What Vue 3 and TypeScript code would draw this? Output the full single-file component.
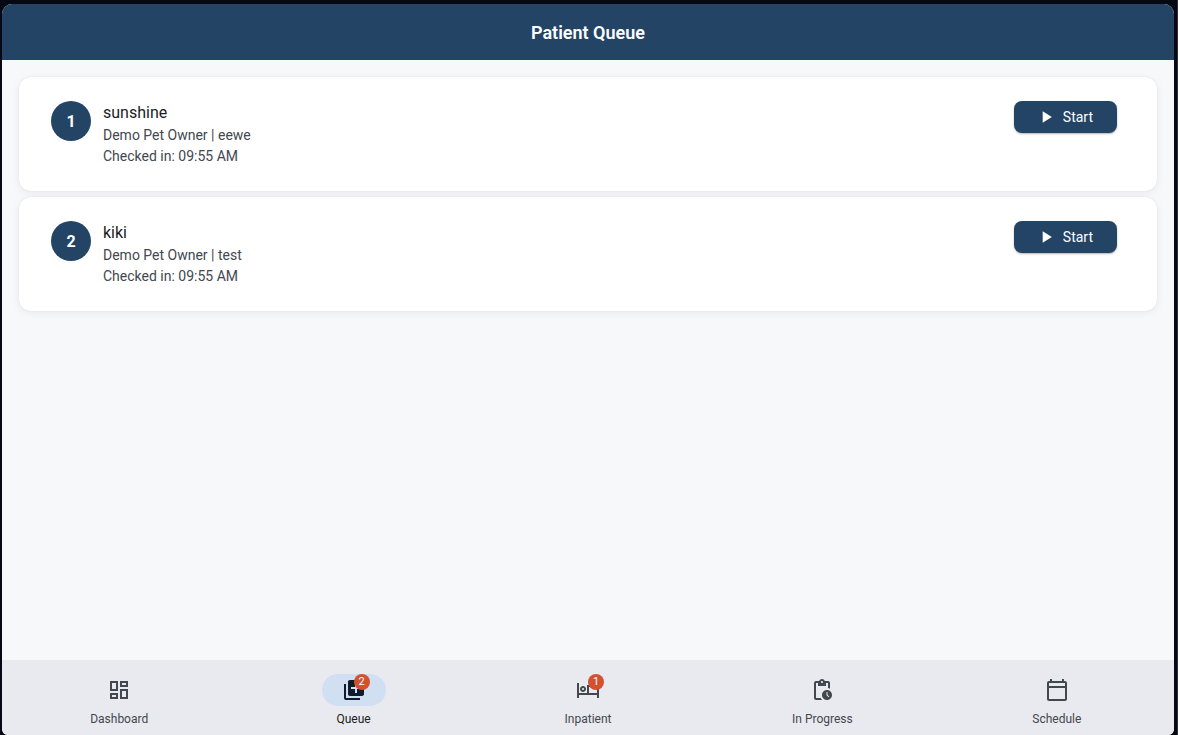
<script setup lang="ts">
import { ref } from 'vue'

interface Patient {
  id: number
  name: string
  owner: string
  reason: string
  checkedIn: string
}

interface Tab {
  label: string
  icon: string
  badge?: number
}

const patients: Patient[] = [
  { id: 1, name: 'sunshine', owner: 'Demo Pet Owner', reason: 'eewe', checkedIn: '09:55 AM' },
  { id: 2, name: 'kiki', owner: 'Demo Pet Owner', reason: 'test', checkedIn: '09:55 AM' },
]

const tabs: Tab[] = [
  {
    label: 'Dashboard',
    icon: 'M19 5v2h-4V5h4M9 5v6H5V5h4m10 8v6h-4v-6h4M9 17v2H5v-2h4M21 3h-8v6h8V3zM11 3H3v10h8V3zm10 8h-8v10h8V11zm-10 4H3v6h8v-6z',
  },
  {
    label: 'Queue',
    badge: 2,
    icon: 'M4 6H2v14c0 1.1.9 2 2 2h14v-2H4V6zm16-4H8c-1.1 0-2 .9-2 2v12c0 1.1.9 2 2 2h12c1.1 0 2-.9 2-2V4c0-1.1-.9-2-2-2zm-1 9h-4v4h-2v-4H9V9h4V5h2v4h4v2z',
  },
  {
    label: 'Inpatient',
    badge: 1,
    icon: 'M7 14c1.66 0 3-1.34 3-3S8.66 8 7 8s-3 1.34-3 3 1.34 3 3 3zm0-4c.55 0 1 .45 1 1s-.45 1-1 1-1-.45-1-1 .45-1 1-1zm12-3h-8v8H3V5H1v15h2v-3h18v3h2v-9c0-2.21-1.79-4-4-4zm2 8h-8V9h6c1.1 0 2 .9 2 2v4z',
  },
  {
    label: 'In Progress',
    icon: 'M17 12c-2.76 0-5 2.24-5 5s2.24 5 5 5 5-2.24 5-5-2.24-5-5-5zm1.65 7.35L16.5 17.2V14h1v2.79l1.85 1.85-.7.71zM18 3h-3.18C14.4 1.84 13.3 1 12 1s-2.4.84-2.82 2H6c-1.1 0-2 .9-2 2v15c0 1.1.9 2 2 2h6.11c-.59-.57-1.07-1.25-1.42-2H6V5h2v3h8V5h2v5.08c.71.1 1.38.31 2 .6V5c0-1.1-.9-2-2-2zm-6 2c-.55 0-1-.45-1-1s.45-1 1-1 1 .45 1 1-.45 1-1 1z',
  },
  {
    label: 'Schedule',
    icon: 'M20 3h-1V1h-2v2H7V1H5v2H4c-1.1 0-2 .9-2 2v16c0 1.1.9 2 2 2h16c1.1 0 2-.9 2-2V5c0-1.1-.9-2-2-2zm0 18H4V10h16v11zm0-13H4V5h16v3z',
  },
]

const activeTab = ref('Queue')
</script>

<template>
  <div class="frame">
    <div class="app">
      <header class="bar">
        <h1>Patient Queue</h1>
      </header>

      <main class="content">
        <ul class="queue">
          <li v-for="(patient, index) in patients" :key="patient.id" class="card">
            <span class="position">{{ index + 1 }}</span>
            <div class="details">
              <h2>{{ patient.name }}</h2>
              <p>{{ patient.owner }} | {{ patient.reason }}</p>
              <p>Checked in: {{ patient.checkedIn }}</p>
            </div>
            <button type="button" class="start">
              <svg viewBox="0 0 24 24" aria-hidden="true"><path d="M8 5v14l11-7z" /></svg>
              Start
            </button>
          </li>
        </ul>
      </main>

      <nav class="tabs">
        <button
          v-for="tab in tabs"
          :key="tab.label"
          type="button"
          class="tab"
          :class="{ active: tab.label === activeTab }"
          @click="activeTab = tab.label"
        >
          <span class="pill">
            <span class="icon">
              <svg viewBox="0 0 24 24" aria-hidden="true"><path :d="tab.icon" /></svg>
              <span v-if="tab.badge" class="badge">{{ tab.badge }}</span>
            </span>
          </span>
          <span class="label">{{ tab.label }}</span>
        </button>
      </nav>
    </div>
  </div>
</template>

<style>
body {
  margin: 0;
  background: #060914;
}
</style>

<style scoped>
.frame {
  box-sizing: border-box;
  min-height: 100vh;
  padding: 4px 3px 0 2px;
  border-right: 1px solid #30323b;
  background: #060914;
  display: flex;
  font-family: Roboto, "Liberation Sans", sans-serif;
}

.app {
  flex: 1;
  min-width: 0;
  display: flex;
  flex-direction: column;
  border-radius: 10px 10px 6px 6px;
  overflow: hidden;
  background: #f6f8fa;
}

.bar {
  padding: 17px 16px 15px;
  text-align: center;
  background: #234465;
  color: #fff;
}

h1 {
  margin: 0;
  font-size: 18px;
  line-height: 24px;
  font-weight: 600;
}

.content {
  flex: 1;
  padding: 17px;
}

.queue {
  margin: 0;
  padding: 0;
  list-style: none;
  display: flex;
  flex-direction: column;
  gap: 6px;
}

.card {
  display: flex;
  align-items: flex-start;
  gap: 12px;
  padding: 24px 40px 24px 32px;
  border-radius: 12px;
  background: #fff;
  box-shadow: 0 0 1px rgba(0, 0, 0, 0.16), 0 2px 8px rgba(0, 0, 0, 0.06);
}

.position {
  flex: none;
  width: 40px;
  height: 40px;
  border-radius: 50%;
  display: flex;
  align-items: center;
  justify-content: center;
  background: #234465;
  color: #fff;
  font-size: 16px;
  font-weight: 700;
}

.details {
  flex: 1;
  min-width: 0;
}

h2 {
  margin: 0;
  font-size: 16px;
  line-height: 24px;
  font-weight: 400;
  color: #1a1c1e;
}

.details p {
  margin: 0;
  font-size: 14px;
  line-height: 21px;
  color: #43474e;
}

.start {
  box-sizing: border-box;
  flex: none;
  height: 32px;
  padding: 0 24px 0 22px;
  border: 0;
  border-radius: 8px;
  display: flex;
  align-items: center;
  gap: 7px;
  background: #234465;
  color: #fff;
  font: 400 14px/20px Roboto, "Liberation Sans", sans-serif;
  box-shadow: 0 1px 2px rgba(0, 0, 0, 0.3);
  cursor: pointer;
}

.start svg {
  width: 20px;
  height: 20px;
  fill: currentColor;
}

.tabs {
  display: flex;
  background: #e9eaef;
}

.tab {
  flex: 1 1 0;
  min-width: 0;
  padding: 14px 0 8px;
  border: 0;
  background: none;
  display: flex;
  flex-direction: column;
  align-items: center;
  gap: 5px;
  color: #43474e;
  font: 400 12px/16px Roboto, "Liberation Sans", sans-serif;
  cursor: pointer;
}

.pill {
  width: 64px;
  height: 32px;
  border-radius: 16px;
  display: flex;
  align-items: center;
  justify-content: center;
}

.active {
  color: #1a1c1e;
}

.active .pill {
  background: #d0dff2;
  color: #101c2b;
}

.icon {
  position: relative;
  width: 24px;
  height: 24px;
}

.icon svg {
  display: block;
  width: 24px;
  height: 24px;
  fill: currentColor;
}

.badge {
  position: absolute;
  top: -4px;
  left: 12px;
  width: 16px;
  height: 16px;
  border-radius: 8px;
  background: #d3512f;
  color: #fff;
  font-size: 11px;
  line-height: 16px;
  text-align: center;
}
</style>
